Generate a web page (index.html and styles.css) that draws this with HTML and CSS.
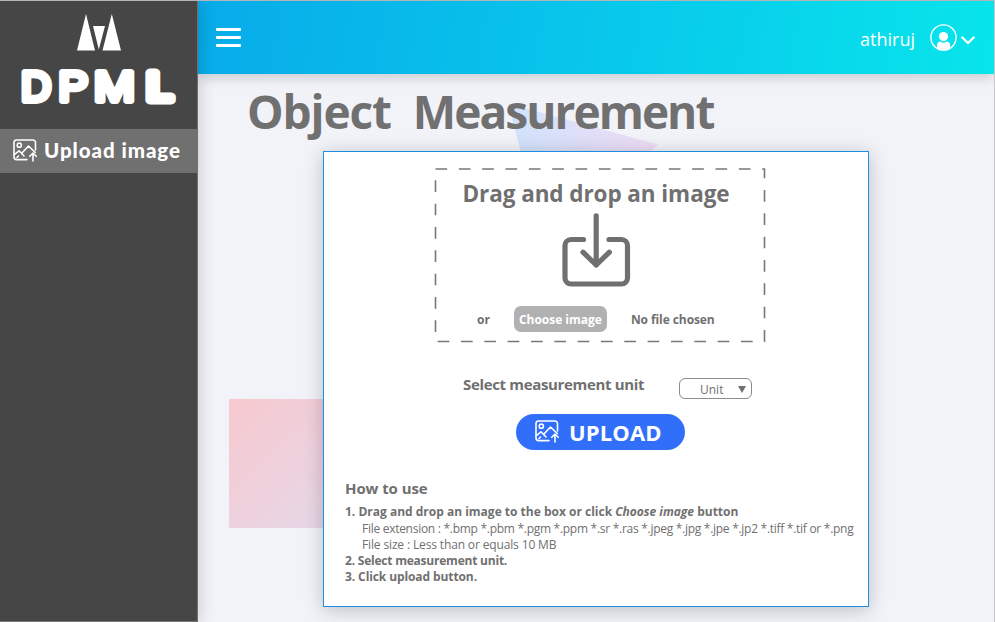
FILE: index.html
```html
<!DOCTYPE html>
<html lang="en">
<head>
<meta charset="utf-8">
<title>Object Measurement</title>
<link rel="stylesheet" href="styles.css">
</head>
<body>
<svg class="defs" aria-hidden="true">
  <symbol id="picture" viewBox="0 0 24 23">
    <path d="M14 20.600H3.600a2.600 2.600 0 0 1-2.600-2.600V3.600A2.600 2.600 0 0 1 3.600 1h16.300a2.600 2.600 0 0 1 2.600 2.600V11"/>
    <circle cx="6.300" cy="6.200" r="2.100"/>
    <path d="M1.500 15.500l4.500-3.700 5 5.200M8.500 14.500l7-7.500 6.800 6.500M4 18.500l1.500-1.500"/>
    <path d="M20 22v-7.500M16.800 17.300l3.200-3.300 3.200 3.300"/>
  </symbol>
</svg>
<div class="app">
  <aside class="sidebar">
    <svg class="logo" viewBox="0 0 197 128">
      <path d="M86 14l9 36.500H77zM111.800 14l9.200 36.500h-18.500zM93 26h12l-6.200 23.500z"/>
      <g class="wordmark">
        <text transform="translate(21 100.500) scale(.97 1)">D</text>
        <text transform="translate(58.500 100.500) scale(1.030 1)">P</text>
        <text transform="translate(94 100.500) scale(1.140 1)">M</text>
        <text class="heavy" transform="translate(147 99.500) scale(1.180 1)">L</text>
      </g>
    </svg>
    <a class="nav-item"><svg class="icon"><use href="#picture"/></svg><span>Upload image</span></a>
  </aside>
  <div class="page">
    <header class="topbar">
      <div class="burger"><i></i><i></i><i></i></div>
      <div class="user">
        <span>athiruj</span>
        <svg class="avatar" viewBox="0 0 27 27">
          <circle cx="13.500" cy="13.500" r="12.600" fill="none" stroke="#fff" stroke-width="1.400"/>
          <circle cx="13.500" cy="12.600" r="4.600"/>
          <path d="M7 24v-2c0-3 1.500-4.500 3-4.500 2 1.500 5 1.500 7 0 1.800 0 3.200 1.500 3.200 4.500v2c-4 3-9.200 3-13.200 0z"/>
        </svg>
        <svg class="chevron" viewBox="0 0 14 9"><path d="M1.300 1.500L7 7l5.700-5.500"/></svg>
      </div>
    </header>
    <main>
      <svg class="shapes" viewBox="0 0 796 547">
        <defs>
          <linearGradient id="sky"><stop offset="0" stop-color="#d0e2fc"/><stop offset="1" stop-color="#eedcf5"/></linearGradient>
          <linearGradient id="rose" x2="1" y2="1"><stop offset="0" stop-color="#f8c9cf"/><stop offset="1" stop-color="#e3d9ea"/></linearGradient>
        </defs>
        <path fill="url(#sky)" d="M310 29.500L460 70.500 350 180z"/>
        <path fill="url(#rose)" d="M31 325h129v129H31z"/>
      </svg>
      <h1><span>Object</span> <span class="second">Measurement</span></h1>
      <section class="card">
        <div class="dropzone">
          <svg class="dashes" viewBox="0 0 332 175"><path d="M1.500 1h329v172.500H1.500z"/></svg>
          <h2>Drag and drop an image</h2>
          <svg class="download" viewBox="0 0 69 74">
            <path d="M21.500 26.500H9a6 6 0 0 0-6 6V65a6 6 0 0 0 6 6h50.500a6 6 0 0 0 6-6V32.500a6 6 0 0 0-6-6H47"/>
            <path d="M34.200 2.800V52M21 39.200L34.200 52l13.200-12.800"/>
          </svg>
          <div class="chooser"><span>or</span><button class="choose">Choose image</button><span class="nofile">No file chosen</span></div>
        </div>
        <div class="unit-row"><label>Select measurement unit</label><div class="select"><span>Unit</span><i></i></div></div>
        <button class="upload"><svg class="icon"><use href="#picture"/></svg><span>UPLOAD</span></button>
        <div class="help">
          <h3>How to use</h3>
          <p>1. Drag and drop an image to the box or click <em>Choose image</em> button</p>
          <p class="note ext">File extension : *.bmp *.pbm *.pgm *.ppm *.sr *.ras *.jpeg *.jpg *.jpe *.jp2 *.tiff *.tif or *.png</p>
          <p class="note">File size : Less than or equals 10 MB</p>
          <p class="tight">2. Select measurement unit.</p>
          <p class="last">3. Click upload button.</p>
        </div>
      </section>
    </main>
  </div>
</div>
</body>
</html>
```
FILE: styles.css
```css
* { box-sizing: border-box; }
body { margin: 0; font-family: "Open Sans", "Noto Sans", sans-serif; color: #707070; }
h1, h2, h3, p { margin: 0; }
button { border: 0; padding: 0; font: inherit; }
.defs { position: absolute; width: 0; height: 0; }
.app { display: flex; width: 995px; height: 622px; border-top: 1px solid #b5b5b9; border-right: 1px solid #c8c8cc; overflow: hidden; }
.icon { width: 24px; height: 23px; fill: none; stroke: #fff; stroke-width: 1.600; stroke-linecap: round; stroke-linejoin: round; flex: none; }

.sidebar { position: relative; z-index: 2; width: 198px; flex: none; background: #464646; border-right: 1px solid #707070; border-bottom: 1px solid #777; box-shadow: 0 0 16px rgba(0, 0, 0, .2); }
.logo { display: block; width: 197px; height: 128px; fill: #fff; margin-top: -1px; }
.wordmark { font: 400 43px "Liberation Sans", sans-serif; stroke: #fff; stroke-width: 6px; stroke-linejoin: round; }
.heavy { font-size: 38px; stroke-width: 9px; }
.nav-item { display: flex; align-items: center; height: 44px; margin-top: 1px; padding: 0 0 1px 13px; gap: 7px; background: #707070; color: #fff; font: 900 20.500px/28px Lato, sans-serif; letter-spacing: .950px; white-space: nowrap; }
.nav-item span { margin-top: -2px; }

.page { flex: 1; display: flex; flex-direction: column; min-width: 0; }
.topbar { position: relative; z-index: 1; display: flex; align-items: center; justify-content: space-between; height: 73px; padding: 0 19px 0 18px; background: linear-gradient(100deg, #08abe9, #08c4eb 45%, #08e5eb); box-shadow: 0 3px 12px rgba(0, 0, 0, .18); }
.burger { display: grid; gap: 5px; width: 25px; }
.burger i { height: 3px; background: #fff; border-radius: 1px; }
.user { display: flex; align-items: center; color: #fff; font-size: 18px; line-height: 26px; }
.user span { margin-top: 3px; }
.avatar { width: 27px; height: 27px; margin-left: 15px; fill: #fff; }
.chevron { width: 14px; height: 9px; margin: 5px 0 0 4px; fill: none; stroke: #fff; stroke-width: 2.200; stroke-linecap: round; }

main { position: relative; flex: 1; background: #f2f3f9; }
.shapes { position: absolute; inset: 0; width: 796px; height: 547px; }
h1 { position: relative; height: 77px; padding: 6px 0 0 49px; font-size: 46px; line-height: 62px; letter-spacing: -1.100px; white-space: nowrap; }
.second { margin-left: 11px; letter-spacing: -1.950px; }

.card { position: relative; display: flex; flex-direction: column; align-items: center; width: 546px; height: 456px; margin-left: 125px; padding-top: 16px; background: #fff; border: 1px solid #1e8fe0; box-shadow: 0 3px 18px rgba(0, 0, 0, .22); }
.dropzone { position: relative; display: flex; flex-direction: column; align-items: center; width: 332px; height: 175px; margin-left: 8px; }
.dashes { position: absolute; inset: 0; width: 332px; height: 175px; fill: none; stroke: #777; stroke-width: 1.600; stroke-dasharray: 11.667; }
h2 { margin: 9px 0 0 -8px; font-size: 22.500px; line-height: 34px; letter-spacing: -.080px; white-space: nowrap; }
.download { width: 69px; height: 74px; margin: 2px 0 0 -8px; fill: none; stroke: #707070; stroke-width: 5.200; stroke-linecap: round; stroke-linejoin: round; }
.chooser { display: flex; align-items: center; align-self: stretch; margin: 19px 0 0 43px; font-size: 12px; font-weight: 700; line-height: 20px; white-space: nowrap; }
.choose { width: 93px; height: 26px; margin-left: 24px; padding-top: 2px; border-radius: 7px; background: #b1b1b1; color: #fff; font-size: 12px; letter-spacing: -.030px; }
.nofile { margin-left: 24px; letter-spacing: -.080px; }
.chooser > span { padding-top: 2px; }
.unit-row { display: flex; align-items: flex-start; align-self: flex-start; margin: 32px 0 0 139px; }
label { width: 216px; font-size: 15px; font-weight: 700; line-height: 18px; letter-spacing: -.340px; white-space: nowrap; }
.select { display: flex; align-items: center; justify-content: space-between; width: 73px; height: 21px; margin-top: 3px; padding: 0 5px 0 20px; border: 1px solid #8c8c8c; border-radius: 6px; font-size: 12px; line-height: 18px; }
.select span { margin-top: 2px; }
.select i { margin-top: 1px; border: 4px solid transparent; border-top: 7px solid #707070; border-bottom: 0; }
.upload { display: flex; align-items: center; width: 169px; height: 36px; margin: 15px 0 0 9px; padding-left: 19px; gap: 10px; border-radius: 18px; background: #316ffb; color: #fff; font-size: 22px; font-weight: 700; line-height: 30px; letter-spacing: .150px; }
.upload .icon { margin-top: -1px; }
.help { align-self: flex-start; margin: 28px 0 0 21px; font-size: 12px; font-weight: 700; line-height: 16px; white-space: nowrap; }
h3 { margin-bottom: 6px; font-size: 15px; line-height: 20px; letter-spacing: -.080px; }
.note { padding-left: 17px; font-weight: 400; letter-spacing: -.140px; }
.ext { margin-top: 1px; letter-spacing: -.280px; }
.tight { letter-spacing: -.220px; }
.last { letter-spacing: -.100px; }
```
